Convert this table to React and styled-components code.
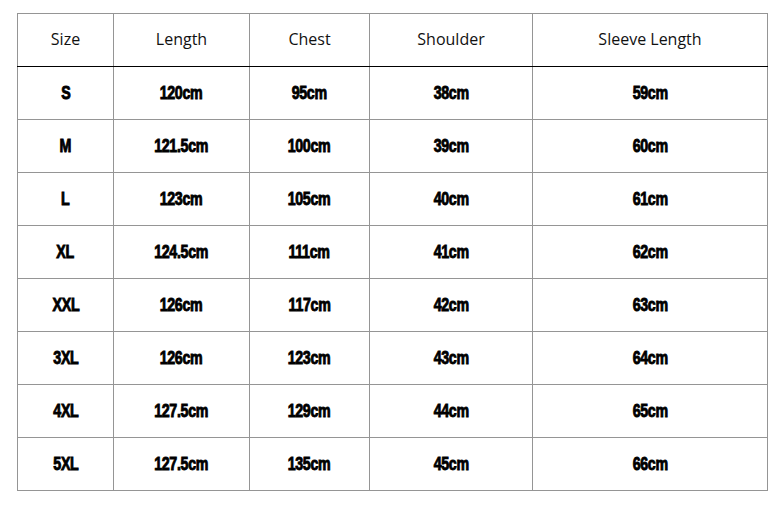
import React from "react";
import styled, { createGlobalStyle } from "styled-components";

const Global = createGlobalStyle`
  body {
    margin: 0;
    background: #fff;
  }
`;

const Page = styled.div`
  padding: 13px 0 0 17px;
`;

const Table = styled.table`
  border-collapse: collapse;
  table-layout: fixed;
  width: 750px;
`;

const Head = styled.th`
  height: 50px;
  padding: 0 0 2px;
  border: 1px solid #959595;
  border-bottom: 1px solid #000;
  font-family: "Open Sans", "Noto Sans", sans-serif;
  font-weight: 400;
  font-size: 16px;
  line-height: 20px;
  color: #111;
  text-align: center;
`;

const Cell = styled.td`
  height: 52px;
  padding: 0;
  border: 1px solid #959595;
  line-height: 20px;
  text-align: center;
`;

/* heavy condensed look, squeezed from Liberation Sans bold */
const Value = styled.span`
  display: inline-block;
  font-family: "Liberation Sans", Arial, sans-serif;
  font-weight: 700;
  font-size: 18px;
  line-height: 20px;
  letter-spacing: -0.4px;
  -webkit-text-stroke: 0.9px #000;
  color: #000;
  transform: scaleX(0.79);
`;

const widths = [96, 136, 120, 163, 235];
const heads = ["Size", "Length", "Chest", "Shoulder", "Sleeve Length"];
const rows = [
  ["S", "120cm", "95cm", "38cm", "59cm"],
  ["M", "121.5cm", "100cm", "39cm", "60cm"],
  ["L", "123cm", "105cm", "40cm", "61cm"],
  ["XL", "124.5cm", "111cm", "41cm", "62cm"],
  ["XXL", "126cm", "117cm", "42cm", "63cm"],
  ["3XL", "126cm", "123cm", "43cm", "64cm"],
  ["4XL", "127.5cm", "129cm", "44cm", "65cm"],
  ["5XL", "127.5cm", "135cm", "45cm", "66cm"],
];

const App = () => {
  return (
    <Page>
      <Global />
      <Table>
        <colgroup>
          {widths.map((w, i) => (
            <col key={i} style={{ width: w }} />
          ))}
        </colgroup>
        <thead>
          <tr>
            {heads.map((h) => (
              <Head key={h}>{h}</Head>
            ))}
          </tr>
        </thead>
        <tbody>
          {rows.map((r) => (
            <tr key={r[0]}>
              {r.map((c, i) => (
                <Cell key={i}>
                  <Value>{c}</Value>
                </Cell>
              ))}
            </tr>
          ))}
        </tbody>
      </Table>
    </Page>
  );
};

export default App;
